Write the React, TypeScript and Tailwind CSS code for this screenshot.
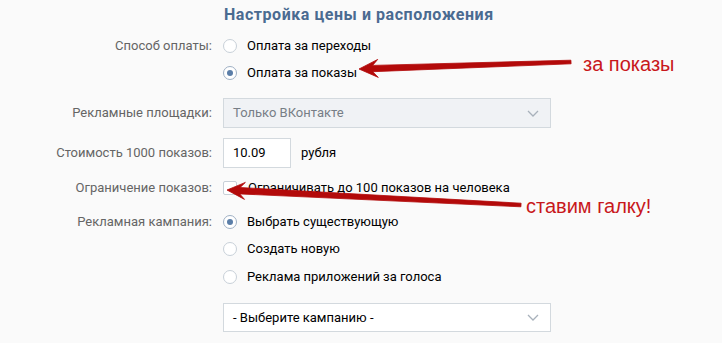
import React from "react"

const font = { fontFamily: "Roboto, 'Noto Sans', sans-serif" }

type Pt = [number, number]

// arrow polygon from the tip back to the tail, tapered shaft with swept head
const arrowPoints = (tip: Pt, tail: Pt, headLen: number, headHalf: number, shaftHead: number, shaftTail: number) => {
    const dx = tail[0] - tip[0]
    const dy = tail[1] - tip[1]
    const len = Math.hypot(dx, dy)
    const d: Pt = [dx / len, dy / len]
    const n: Pt = [-d[1], d[0]]
    const at = (t: number, s: number): Pt => [tip[0] + d[0] * t + n[0] * s, tip[1] + d[1] * t + n[1] * s]
    const pts: Pt[] = [
        tip,
        at(headLen, headHalf),
        at(headLen * 0.72, shaftHead),
        at(len, shaftTail),
        at(len, -shaftTail),
        at(headLen * 0.72, -shaftHead),
        at(headLen, -headHalf),
    ]
    return pts.map(p => `${p[0].toFixed(1)},${p[1].toFixed(1)}`).join(" ")
}

const Radio = ({ checked }: { checked?: boolean }) => (
    <span className={`w-[14px] h-[14px] rounded-full border bg-white flex items-center justify-center shrink-0 ${checked ? "border-[#9fb0c4]" : "border-[#c8d0d8]"}`}>
        {checked && <span className="w-[6px] h-[6px] rounded-full bg-[#5b7ea8]" />}
    </span>
)

const Chevron = () => (
    <svg width="12" height="7" viewBox="0 0 12 7" className="shrink-0">
        <path d="M1 1 L6 6 L11 1" fill="none" stroke="#a8b1bb" strokeWidth="1.3" />
    </svg>
)

const Row = ({ label, className, children }: { label?: string, className?: string, children: React.ReactNode }) => (
    <div className={`flex items-center ${className ?? ""}`}>
        <div className="w-[213px] text-right text-[13px] text-[#656565] pr-[1px] leading-[18px]">{label}</div>
        <div className="ml-[10px] flex items-center">{children}</div>
    </div>
)

const Option = ({ text, checked }: { text: string, checked?: boolean }) => (
    <div className="flex items-center h-[18px]">
        <Radio checked={checked} />
        <span className="ml-[10px] text-[13px] text-black leading-[18px]">{text}</span>
    </div>
)

const App = () => {
    return (
        <div className="w-[722px] h-[343px] bg-[#fafafa] relative overflow-hidden" style={font}>
            <div className="flex flex-col pt-[6px]">
                <div className="pl-[224px] h-[18px] text-[16px] font-bold tracking-[0.55px] text-[#4a6b91] leading-[18px]">
                    Настройка цены и расположения
                </div>

                <Row label="Способ оплаты:" className="mt-[13px]">
                    <Option text="Оплата за переходы" />
                </Row>
                <Row className="mt-[9px]">
                    <Option text="Оплата за показы" checked />
                </Row>

                <Row label="Рекламные площадки:" className="mt-[16px]">
                    <div className="w-[328px] h-[30px] border border-[#d3d9de] bg-[#f0f2f5] flex items-center justify-between pl-[9px] pr-[11px]">
                        <span className="text-[13px] text-[#777e86]">Только ВКонтакте</span>
                        <Chevron />
                    </div>
                </Row>

                <Row label="Стоимость 1000 показов:" className="mt-[10px]">
                    <div className="w-[68px] h-[30px] border border-[#d3d9de] bg-white flex items-center pl-[9px]">
                        <span className="text-[13px] text-black">10.09</span>
                    </div>
                    <span className="ml-[10px] text-[13px] text-black">рубля</span>
                </Row>

                <Row label="Ограничение показов:" className="mt-[11px]">
                    <div className="flex items-center h-[18px]">
                        <span className="w-[14px] h-[14px] rounded-[2px] border border-[#c8d0d8] bg-white shrink-0" />
                        <span className="ml-[11px] text-[13px] text-black leading-[18px]">Ограничивать до 100 показов на человека</span>
                    </div>
                </Row>

                <Row label="Рекламная кампания:" className="mt-[16px]">
                    <Option text="Выбрать существующую" checked />
                </Row>
                <Row className="mt-[9px]">
                    <Option text="Создать новую" />
                </Row>
                <Row className="mt-[10px]">
                    <Option text="Реклама приложений за голоса" />
                </Row>

                <Row className="mt-[17px]">
                    <div className="w-[328px] h-[29px] border border-[#d3d9de] bg-white flex items-center justify-between pl-[9px] pr-[11px]">
                        <span className="text-[13px] text-black">- Выберите кампанию -</span>
                        <Chevron />
                    </div>
                </Row>
            </div>

            {/* annotations over the form */}
            <svg className="absolute left-0 top-0 pointer-events-none" width="722" height="343">
                <polygon points={arrowPoints([359, 69], [571, 62], 19, 9, 3.2, 1.8)} fill="#b30a0a" stroke="#b30a0a" strokeWidth="0.8" strokeLinejoin="round" />
                <polygon points={arrowPoints([227, 190], [521, 205], 18, 8.5, 3.2, 1.8)} fill="#b30a0a" stroke="#b30a0a" strokeWidth="0.8" strokeLinejoin="round" />
            </svg>
            <span className="absolute left-[583px] top-[52px] text-[20px] leading-[24px] text-[#c8171b]" style={{ fontFamily: "'Liberation Sans', Arial, sans-serif" }}>
                за показы
            </span>
            <span className="absolute left-[526px] top-[194px] text-[20px] leading-[24px] text-[#c8171b]" style={{ fontFamily: "'Liberation Sans', Arial, sans-serif" }}>
                ставим галку!
            </span>
        </div>
    )
}

export default App
